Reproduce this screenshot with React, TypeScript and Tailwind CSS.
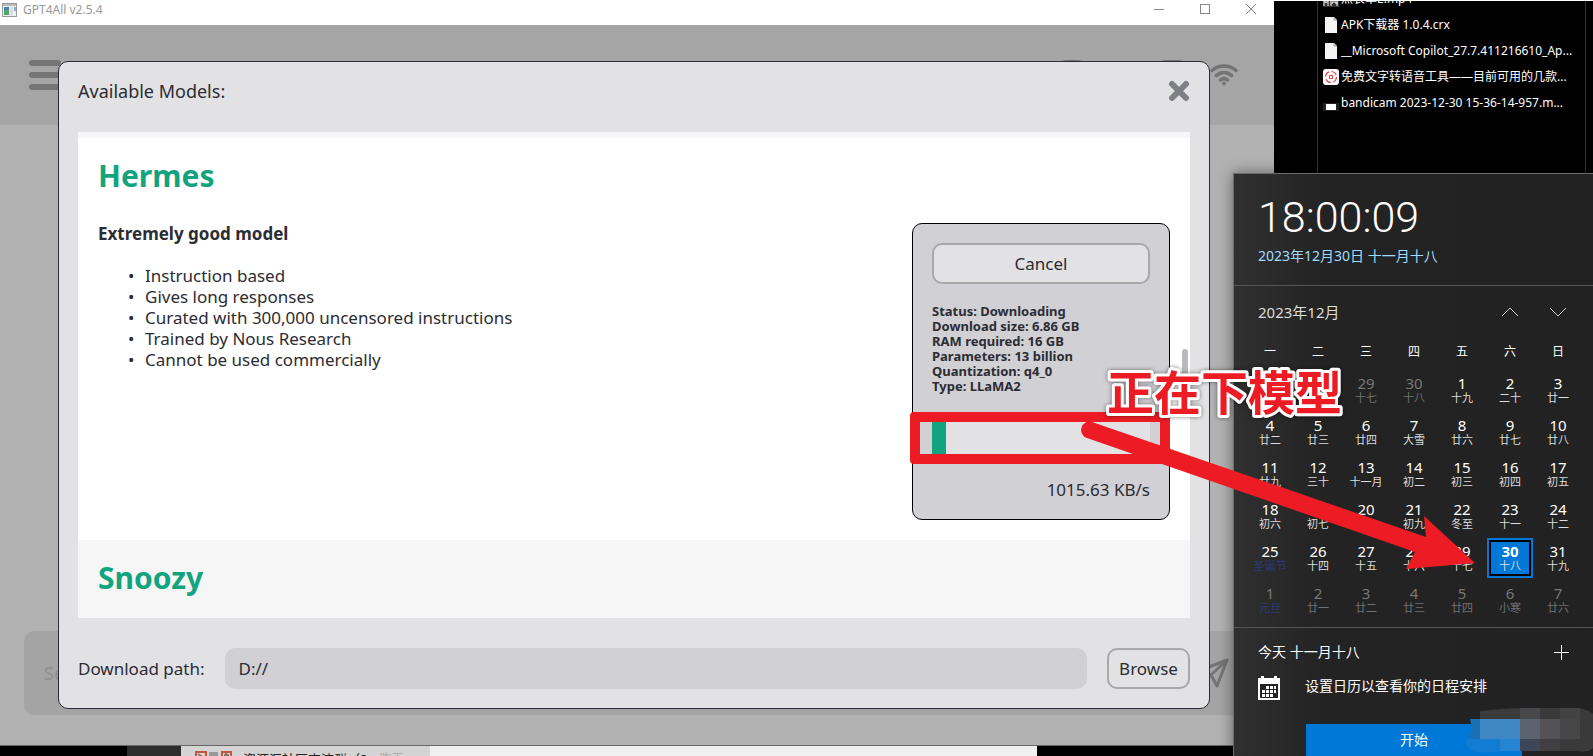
import React from 'react';

type Day = { n: number; sub: string; tone?: 'dim' | 'today' | 'holiday' | 'dimHoliday' };

const weekdays = ['一', '二', '三', '四', '五', '六', '日'];

const days: Day[] = [
  { n: 27, sub: '十五', tone: 'dim' },
  { n: 28, sub: '十六', tone: 'dim' },
  { n: 29, sub: '十七', tone: 'dim' },
  { n: 30, sub: '十八', tone: 'dim' },
  { n: 1, sub: '十九' },
  { n: 2, sub: '二十' },
  { n: 3, sub: '廿一' },
  { n: 4, sub: '廿二' },
  { n: 5, sub: '廿三' },
  { n: 6, sub: '廿四' },
  { n: 7, sub: '大雪' },
  { n: 8, sub: '廿六' },
  { n: 9, sub: '廿七' },
  { n: 10, sub: '廿八' },
  { n: 11, sub: '廿九' },
  { n: 12, sub: '三十' },
  { n: 13, sub: '十一月' },
  { n: 14, sub: '初二' },
  { n: 15, sub: '初三' },
  { n: 16, sub: '初四' },
  { n: 17, sub: '初五' },
  { n: 18, sub: '初六' },
  { n: 19, sub: '初七' },
  { n: 20, sub: '初八' },
  { n: 21, sub: '初九' },
  { n: 22, sub: '冬至' },
  { n: 23, sub: '十一' },
  { n: 24, sub: '十二' },
  { n: 25, sub: '圣诞节', tone: 'holiday' },
  { n: 26, sub: '十四' },
  { n: 27, sub: '十五' },
  { n: 28, sub: '十六' },
  { n: 29, sub: '十七' },
  { n: 30, sub: '十八', tone: 'today' },
  { n: 31, sub: '十九' },
  { n: 1, sub: '元旦', tone: 'dimHoliday' },
  { n: 2, sub: '廿一', tone: 'dim' },
  { n: 3, sub: '廿二', tone: 'dim' },
  { n: 4, sub: '廿三', tone: 'dim' },
  { n: 5, sub: '廿四', tone: 'dim' },
  { n: 6, sub: '小寒', tone: 'dim' },
  { n: 7, sub: '廿六', tone: 'dim' },
];

const features = [
  'Instruction based',
  'Gives long responses',
  'Curated with 300,000 uncensored instructions',
  'Trained by Nous Research',
  'Cannot be used commercially',
];

const specs = [
  'Status: Downloading',
  'Download size: 6.86 GB',
  'RAM required: 16 GB',
  'Parameters: 13 billion',
  'Quantization: q4_0',
  'Type: LLaMA2',
];

const PageIcon = () => (
  <svg width="16" height="16" viewBox="0 0 16 16">
    <path d="M2 0h9l3 3v13H2z" fill="#f5f5f5" />
    <path d="M11 0v3h3" fill="none" stroke="#9a9a9a" />
  </svg>
);

const PinIcon = () => (
  <svg width="16" height="16" viewBox="0 0 16 16">
    <rect width="16" height="16" rx="3" fill="#fff" />
    <circle cx="8" cy="8" r="5.5" fill="none" stroke="#e5484d" strokeWidth="1.2" strokeDasharray="6 2.6" />
    <rect x="6.5" y="6.5" width="3" height="3" fill="none" stroke="#e5484d" />
  </svg>
);

const VideoIcon = () => (
  <svg width="16" height="16" viewBox="0 0 16 16">
    <path d="M0 8h16v8H0z" fill="#222" />
    <path d="M3 9h10v6H3z" fill="#fff" />
  </svg>
);

const Mp4Icon = () => (
  <svg width="16" height="16" viewBox="0 0 16 16">
    <path d="M0 0h16v16H0z" fill="#333" />
    <path d="M1 15V9l2 3 2-3v6M8 15V9h2v3H8M12 8v4h3M14 8v7" fill="none" stroke="#fff" />
  </svg>
);

const files = [
  { icon: <Mp4Icon />, name: '点表单E.mp4' },
  { icon: <PageIcon />, name: 'APK下载器 1.0.4.crx' },
  { icon: <PageIcon />, name: '__Microsoft Copilot_27.7.411216610_Ap...' },
  { icon: <PinIcon />, name: '免费文字转语音工具——目前可用的几款...' },
  { icon: <VideoIcon />, name: 'bandicam 2023-12-30 15-36-14-957.m...' },
];

const DesktopFiles = () => (
  <div className="absolute top-0 right-0 flex h-[173px] w-[319px] overflow-hidden border-t border-white bg-black pr-[7px] pl-[43px]">
    <ul className="-mt-[15px] w-full border-x border-[#333] pl-[5px]">
      {files.map((file) => (
        <li key={file.name} className="flex h-[26px] items-center gap-0.5 text-xs whitespace-nowrap text-white">
          <span className="shrink-0">{file.icon}</span>
          {file.name}
        </li>
      ))}
    </ul>
  </div>
);

const TitleBar = () => (
  <div className="flex h-[25px] items-start justify-between bg-white text-[#999]">
    <div className="flex h-[19px] items-center gap-1.5 pl-0.5 text-xs">
      <svg width="15" height="14" viewBox="0 0 15 14">
        <rect x=".5" y=".5" width="14" height="13" fill="#eee" stroke="#999" />
        <path d="M1 1h13v2H1z" fill="#bbb" />
        <path d="M2 4h5v8H2z" fill="#4585ad" />
        <path d="M2 7h5v5H2z" fill="#4fa56c" />
        <path d="M8 4h3v8H8z" fill="#dcdcdc" />
        <path d="M12 4h2v4h-2z" fill="#7db3dc" />
      </svg>
      GPT4All v2.5.4
    </div>
    <div className="flex h-[18px] items-center gap-9 pr-[18px]">
      <button aria-label="Minimize">
        <svg width="10" height="10" viewBox="0 0 10 10" stroke="#888"><path d="M0 5.5h10" /></svg>
      </button>
      <button aria-label="Maximize">
        <svg width="10" height="10" viewBox="0 0 10 10" stroke="#888" fill="none"><rect x=".5" y=".5" width="9" height="9" /></svg>
      </button>
      <button aria-label="Close window">
        <svg width="10" height="10" viewBox="0 0 10 10" stroke="#888"><path d="M0 0l10 10M10 0L0 10" /></svg>
      </button>
    </div>
  </div>
);

const DownloadCard = () => (
  <div className="flex w-[258px] flex-col rounded-[10px] border border-black bg-[#d1d0d5] p-[19px]">
    <button className="h-[41px] rounded-[10px] border-2 border-[#a8a8a8] bg-[#e2e2e4] text-[17px]">Cancel</button>
    <div className="mt-5 text-[13px] leading-[15px] font-bold">
      {specs.map((spec) => (
        <p key={spec}>{spec}</p>
      ))}
    </div>
    <div className="mt-[26px] h-9 bg-[#e2e2e4]" role="progressbar" aria-valuenow={6} aria-label="Download progress">
      <div className="h-full w-3.5 bg-[#13a47f]"></div>
    </div>
    <p className="mt-6 text-right text-[17px] leading-5">1015.63 KB/s</p>
  </div>
);

const ModelDialog = () => (
  <div
    role="dialog"
    aria-label="Available Models"
    className="absolute top-[61px] right-16 bottom-9 left-[58px] flex flex-col rounded-[10px] border border-[#2b2b35] bg-[#e2e2e4] px-[19px] pt-[17px] pb-[19px] text-[#2c2c33]"
  >
    <div className="flex items-center justify-between">
      <h1 className="text-lg leading-6">Available Models:</h1>
      <button aria-label="Close">
        <svg width="22" height="22" viewBox="0 0 22 22" stroke="#7e8085" strokeWidth="6" strokeLinecap="round">
          <path d="M4 4l14 14M18 4L4 18" />
        </svg>
      </button>
    </div>

    <div className="relative mt-[29px] flex min-h-0 flex-1 flex-col overflow-hidden bg-[#f6f6f6] pt-1.5">
      <section className="flex h-[402px] shrink-0 justify-between bg-white px-5">
        <div>
          <h2 className="mt-[18px] text-[30px] leading-10 font-bold text-[#13a47f]">Hermes</h2>
          <p className="mt-[26px] text-[17px] leading-6 font-bold">Extremely good model</p>
          <ul className="mt-[19px] list-none text-[17px] leading-[21px]">
            {features.map((feature) => (
              <li key={feature} className="flex pl-[30px]">
                <span className="w-[17px]">•</span>
                {feature}
              </li>
            ))}
          </ul>
        </div>
        <div className="pt-[85px]">
          <DownloadCard />
        </div>
      </section>
      <section className="px-5">
        <h2 className="mt-[18px] text-[30px] leading-10 font-bold text-[#13a47f]">Snoozy</h2>
      </section>
      <div className="absolute top-[217px] right-0.5 h-14 w-1.5 rounded-full bg-[#bababa]"></div>
    </div>

    <div className="mt-[30px] flex items-center gap-5 text-[17px]">
      <label htmlFor="path">Download path:</label>
      <input
        id="path"
        defaultValue="D://"
        className="h-[41px] min-w-0 flex-1 rounded-[10px] bg-[#d1d0d5] px-3.5"
      />
      <button className="h-[41px] w-[83px] rounded-[10px] border-2 border-[#a8a8a8]">Browse</button>
    </div>
  </div>
);

const ChatWindow = () => (
  <div className="absolute top-0 right-[319px] bottom-[11px] left-0 flex flex-col bg-[#b2b2b2]">
    <TitleBar />
    <div className="flex h-[100px] items-start bg-[#a5a5a5] pt-[35px] pr-9 pl-[29px]">
      <button aria-label="Menu" className="mr-auto flex w-8 flex-col gap-1.5">
        <span className="h-1.5 rounded-sm bg-[#757575]"></span>
        <span className="h-1.5 rounded-sm bg-[#757575]"></span>
        <span className="h-1.5 rounded-sm bg-[#757575]"></span>
      </button>
      <svg className="mr-[26px]" width="126" height="28" viewBox="0 0 126 28" fill="none" stroke="#747474" strokeWidth="3">
        <rect x="2" y="1.5" width="24" height="24" rx="6" />
        <path d="M102 26V8q0-6.500 6-6.500h12q6 0 6 6.500v18" />
      </svg>
      <svg className="mt-1" width="28" height="22" viewBox="0 0 28 22" fill="none" stroke="#747474" strokeWidth="3.5" strokeLinecap="round">
        <path d="M2 6.500C9 .5 19 .5 26 6.500M6.500 11.500c4.500-4 10.500-4 15 0M10.500 16c2.500-2 4.500-2 7 0" />
        <circle cx="14" cy="19.500" r="2" fill="#747474" stroke="none" />
      </svg>
    </div>
    <div className="mt-auto mb-[30px] ml-6 flex h-[84px] items-center rounded-[10px] bg-[#a4a4a4] pr-[45px] pl-5">
      <input aria-label="Message" placeholder="Send a message..." className="h-10 min-w-0 flex-1 text-lg placeholder:text-[#8f8f92]" />
      <button aria-label="Send">
        <svg width="30" height="30" viewBox="0 0 30 30" fill="none" stroke="#747474" strokeWidth="3" strokeLinejoin="round">
          <path d="M28 2L2 12l10 5 6 11zM28 2L12 17" />
        </svg>
      </button>
    </div>
    <ModelDialog />
  </div>
);

const Taskbar = () => (
  <div className="absolute right-[319px] bottom-0 left-0 flex h-[11px] overflow-hidden border-t border-[#666] bg-black">
    <div className="ml-[127px] w-[54px] bg-[#2d2d2d]"></div>
    <div className="flex w-[249px] items-start bg-[#d4d4d4] pt-[5px] pl-3.5 text-[13px] text-[#222]">
      <svg width="38" height="14" viewBox="0 0 38 14">
        <path d="M1 1h10v12H1zM27 1h9v12h-9z" fill="#e8d5c8" stroke="#c4553f" strokeWidth="2" />
        <path d="M14 1h9v12h-9z" fill="#999" />
        <path d="M3 3l6 4M29 4h5M31 2v8" stroke="#777" strokeWidth="2" />
      </svg>
      <span className="ml-2.5 leading-4 whitespace-nowrap">资源汇社区交流群（2</span>
      <span className="ml-3 text-xs leading-4 whitespace-nowrap text-[#aaa]">昨天</span>
    </div>
    <div className="w-[607px] bg-[#f0f0f0]"></div>
  </div>
);

const numberTone = (tone?: string) => {
  if (tone === 'dim' || tone === 'dimHoliday') return 'text-[#777]';
  if (tone === 'today') return 'font-bold text-white';
  return 'text-white';
};

const subTone = (tone?: string) => {
  if (tone === 'dim') return 'text-[#707070]';
  if (tone === 'holiday' || tone === 'dimHoliday') return 'text-[#2d3a78]';
  return 'text-[#ddd]';
};

const CalendarFlyout = () => (
  <div className="absolute top-[173px] right-0 bottom-0 w-[360px] overflow-hidden border-t border-l border-[#6b6b6b] bg-gradient-to-r from-[#303030] via-[#232323] via-25% to-[#222] text-white shadow-[0_0_14px_rgba(0,0,0,0.45)]">
    <div className="h-28 border-b border-[#555] px-6 pt-4">
      <p className="font-[Roboto] text-[43px] leading-[54px] font-light">18:00:09</p>
      <button className="block text-sm leading-6 text-[#9fdcff]">2023年12月30日 十一月十八</button>
    </div>

    <div className="flex items-center justify-between pt-3.5 pr-[27px] pl-6 text-[15px] leading-6 text-[#ddd]">
      <span>2023年12月</span>
      <div className="flex gap-8">
        <button aria-label="Previous month">
          <svg width="16" height="10" viewBox="0 0 16 10" fill="none" stroke="#ccc"><path d="M0 9l8-8 8 8" /></svg>
        </button>
        <button aria-label="Next month">
          <svg width="16" height="10" viewBox="0 0 16 10" fill="none" stroke="#ccc"><path d="M0 1l8 8 8-8" /></svg>
        </button>
      </div>
    </div>

    <table className="mt-[15px] ml-3 w-[336px] table-fixed text-center">
      <thead>
        <tr className="h-[30px] text-xs">
          {weekdays.map((d) => (
            <th key={d} className="pb-1 font-normal">{d}</th>
          ))}
        </tr>
      </thead>
      <tbody>
        {[0, 1, 2, 3, 4, 5].map((week) => (
          <tr key={week} className="h-[42px]">
            {days.slice(week * 7, week * 7 + 7).map((day) => (
              <td key={day.n} className="p-px">
                <div className={day.tone === 'today' ? 'h-10 border-2 border-[#0078d7] bg-black p-0.5' : 'h-10 p-1'}>
                  <div className={day.tone === 'today' ? 'h-8 bg-[#0078d7]' : 'h-8'}>
                    <p className={`text-[15px] leading-[18px] ${numberTone(day.tone)}`}>{day.n}</p>
                    <p className={`text-[11px] leading-[11px] whitespace-nowrap ${subTone(day.tone)}`}>{day.sub}</p>
                  </div>
                </div>
              </td>
            ))}
          </tr>
        ))}
      </tbody>
    </table>

    <div className="mt-1.5 border-t border-[#555] px-6 pt-3">
      <div className="flex items-center justify-between text-sm leading-6">
        <span>今天 十一月十八</span>
        <button aria-label="Add event">
          <svg width="15" height="15" viewBox="0 0 15 15" stroke="#fff"><path d="M0 7.5h15M7.5 0v15" /></svg>
        </button>
      </div>
      <div className="mt-3 flex items-start gap-[25px]">
        <svg width="22" height="24" viewBox="0 0 22 24">
          <path d="M0 2h3V0h3v2h10V0h3v2h3v22H0z" fill="#fff" />
          <path d="M2 8h18v14H2z" fill="#252525" />
          <path d="M8 10h3v3H8zM12 10h3v3h-3zM16 10h2v3h-2zM4 14h3v3H4zM8 14h3v3H8zM12 14h3v3h-3zM16 14h2v3h-2zM4 18h3v3H4zM8 18h3v3H8zM12 18h3v3h-3z" fill="#fff" />
        </svg>
        <span className="text-sm leading-5">设置日历以查看你的日程安排</span>
      </div>
      <button className="mt-6 ml-12 h-8 w-[216px] bg-[#0078d7] text-sm">开始</button>
    </div>
  </div>
);

const Smudge = () => (
  <svg className="absolute right-0 bottom-0.5" width="127" height="46" viewBox="0 0 127 46">
    <path d="M14 3Q40 0 60 0H112Q124 2 127 6V40Q122 45 112 43H54L14 24z" fill="#3a3a3a" />
    <path d="M4 11h10v20H2q6-8 2-20z" fill="#1b70b5" />
    <path d="M2 31h52v12H38L14 45Q0 42 0 34z" fill="#127bd2" />
    <path d="M14 11h40v20H14z" fill="#3f87c4" />
    <path d="M34 31h20v12H34z" fill="#2684d4" />
    <path d="M54 11h20v20H54z" fill="#5c6370" />
    <path d="M54 31h20v12H54z" fill="#3e4757" />
    <path d="M74 11h20v20H74z" fill="#535356" />
    <path d="M94 11h20v20H94z" fill="#474747" />
    <path d="M74 31h20v12H74z" fill="#404042" />
    <path d="M54 0h20v11H54z" fill="#48484a" />
    <path d="M94 0h20v11H94z" fill="#434343" />
  </svg>
);

const Annotations = () => (
  <div className="pointer-events-none">
    <div className="absolute top-[412px] right-[423px] h-[52px] w-[260px] rounded border-[10px] border-[#ed1c24]"></div>
    <svg className="absolute top-[350px] right-[113px]" width="400" height="230" viewBox="1080 350 400 230">
      <text
        x="1107"
        y="410"
        className="text-[47px] font-bold drop-shadow-[0_0_2px_rgba(0,0,0,0.5)]"
        fill="#ed1c24"
        stroke="#fff"
        strokeWidth="6"
        strokeLinejoin="round"
        paintOrder="stroke"
      >
        正在下模型
      </text>
      <path d="M1092 422L1426 537L1424 516L1475 563L1406 569L1415 552L1087 438A8 8 0 0 1 1092 422z" fill="#ed1c24" />
    </svg>
  </div>
);

const App: React.FC = () => {
  return (
    <div className="relative h-screen overflow-hidden bg-black font-['Noto_Sans','Noto_Sans_CJK_SC',sans-serif]">
      <DesktopFiles />
      <Taskbar />
      <ChatWindow />
      <CalendarFlyout />
      <Smudge />
      <Annotations />
    </div>
  );
};

export default App;
